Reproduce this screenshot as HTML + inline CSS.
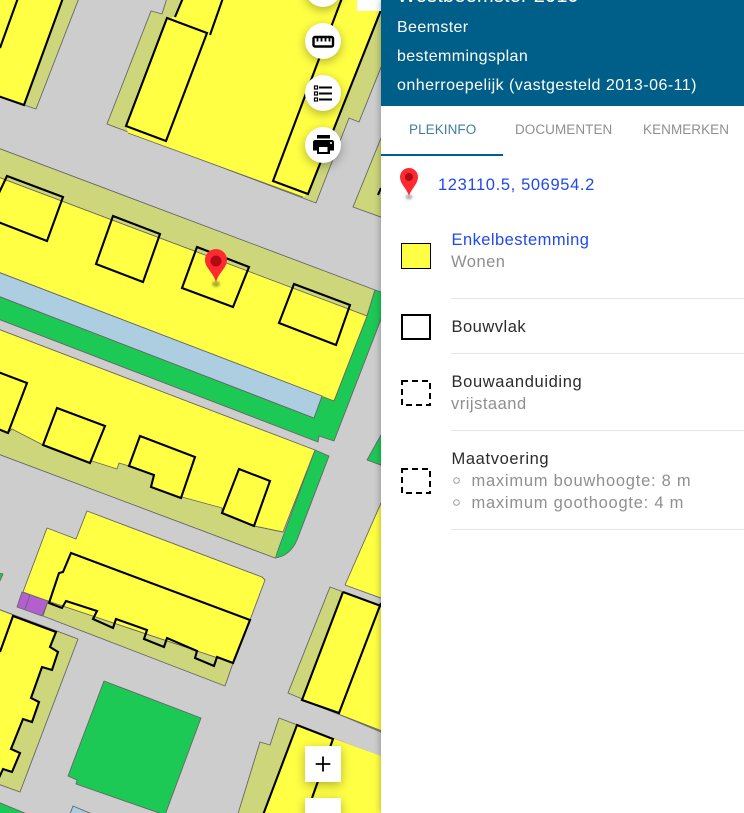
<!DOCTYPE html>
<html><head><meta charset="utf-8"><style>
html,body{margin:0;padding:0;background:#cdcdcd}
#r{position:relative;width:744px;height:813px;overflow:hidden;font-family:"Liberation Sans",sans-serif}
#m{position:absolute;left:0;top:0}
.b{position:absolute;background:#fff;box-shadow:0 3px 10px rgba(0,0,0,.3)}
.c{border-radius:50%;width:36px;height:36px;left:305px}
.b svg{position:absolute;left:0;top:0}
#p{position:absolute;left:381px;top:0;width:363px;height:813px;background:#fff;box-shadow:0 0 7px rgba(0,0,0,.35)}
#h{position:absolute;left:0;top:0;width:363px;height:106px;background:#005f88}
.t{position:absolute;white-space:nowrap;line-height:20px;font-size:16.5px;letter-spacing:.5px}
.w{color:#fff;left:16px;font-size:16px;letter-spacing:.38px}
.g{color:#8f8f8f}.k{color:#2b2b2b}.l{color:#2148f0}
.u{font-size:13.5px;letter-spacing:.06px}
.d{position:absolute;left:70px;right:0;height:1px;background:#e4e4e4}
</style></head><body><div id="r">
<svg id="m" width="381" height="813" viewBox="0 0 381 813">
<rect width="381" height="813" fill="#cdcdcd"/>
<g stroke="#666" stroke-width=".9" stroke-linejoin="round">
<polygon fill="#cdd67a" points="63,-2 79,-2 36,109 24,105"/>
<polygon fill="#ffff44" points="-2,-2 63,-2 24,105 -2,96"/>
<polygon fill="#cdd67a" points="167,-2 162,14 151,11 107,124 316,203 349,118 359,122 400,20 400,-2"/>
<polygon fill="#ffff44" stroke="none" points="183,-2 175,17 167,18 126,126 128,133 303,197 308,194 381,10 381,-2"/>
<line x1="128" y1="133" x2="303" y2="197"/>
<polygon fill="#cdd67a" points="-2,148 375,290 367,316 -2,178"/>
<polygon fill="#1dc955" points="-2,296 314,418 322,396 334,401 367,316 375,290 400,298 400,270 334,441 319,436 318,442 -2,319"/>
<polygon fill="#ffff44" points="-2,177 367,316 334,401 -2,272"/>
<polygon fill="#adcde0" points="-2,272 322,396 314,418 -2,296"/>
<path fill="#1dc955" d="M315,450L329,456L297,540Q290,556 275,558Z"/>
<polygon fill="#cdd67a" stroke="none" points="-2,410 150,465 283,520 283,532 275,558 -2,454"/>
<line x1="-2" y1="454" x2="275" y2="558" stroke="#666"/>
<polygon fill="#ffff44" points="-2,329 315,450 283,532 254,526 222,513 222,508 182,497 181,498 151,487 154,475 129,466 119,463 117,469 92,461 90,463 43,445 12,429 8,433 -2,429"/>
<polygon fill="#cdd67a" points="48,601 233,663 225,686 43,616"/>
<polygon fill="#ffff44" points="87,511 262,577 265,580 250,620 233,663 48,601 23,592 47,528 76,539"/>
<polygon fill="#b35fcf" points="22,592 48,601 42,616 17,607"/>
<line x1="30" y1="595" x2="25" y2="609"/>
<polygon fill="#cdd67a" points="-2,609 78,639 20,792 -2,784"/>
<polygon fill="#ffff44" stroke="none" points="-2,610 13,616 56,632 50,647 58,652 52,670 42,667 31,698 39,702 32,722 23,719 11,749 20,753 12,772 3,769 -2,780"/>
<polygon fill="#1dc955" points="104,681 201,718 165,815 76,784 77,780 68,776"/>
<polygon fill="#1dc955" points="-2,802 27,814 -2,814"/>
<polygon fill="#adcde0" points="73,806 92,814 70,814"/>
<polygon fill="#1dc955" points="-2,573 3,574 -2,585"/>
<polygon fill="#cdd67a" points="330,587 400,613 400,740 288,693"/>
<polygon fill="#ffff44" points="343,592 400,613 400,738 302,700"/>
<polygon fill="#ffff44" points="381,503 345,585 400,605 400,503"/>
<polygon fill="#cdd67a" points="381,138 353,207 400,224 400,138"/>
<polygon fill="#1dc955" points="381,435 367,460 400,472 400,435"/>
<polygon fill="#cdd67a" points="279,718 400,764 400,830 233,830 260,742 270,745"/>
<polygon fill="#ffff44" stroke="none" points="297,725 400,763 400,830 257,830"/>
</g>
<g fill="none" stroke="#000" stroke-width="2.1" stroke-linejoin="miter">
<path d="M18,-2L0,48M63,-2L24,105L-2,96"/>
<polygon points="167,18 207,33 166,141 126,126"/>
<path d="M175,17L183,-2M223,-2L210,35"/>
<path d="M342,-2L273,181L308,194L381,10"/>
<path d="M378,195L381,188"/>
<path d="M-2,195L7,176L63,197L47,241L-2,222"/>
<polygon points="113,216 160,234 143,282 96,264"/>
<polygon points="197,247 249,267 233,307 182,288"/>
<polygon points="294,284 350,305 336,345 279,323"/>
<path d="M-2,372L27,383L8,433L-2,429"/>
<polygon points="57,408 105,426 90,463 43,445"/>
<polygon points="140,436 195,457 181,498 151,487 154,475 129,466"/>
<polygon points="239,469 270,481 254,526 222,513"/>
<polygon points="71,553 250,620 233,663 217,657 214,666 195,658 197,651 167,638 164,647 144,639 147,630 116,619 113,628 93,619 97,611 66,601 62,608 49,603 59,573 63,572"/>
<path d="M0,652L13,616L56,632L50,647L58,652L52,670L42,667L31,698L39,702L32,722L23,719L11,749L20,753L12,772L3,769L-2,780"/>
<path d="M343,592L400,613M343,592L302,700L339,713L381,603"/>
<path d="M263,815L297,725L333,739L312,798"/>
</g>
<ellipse cx="216" cy="284" rx="4" ry="3" fill="#5a5a20" opacity=".5" style="filter:blur(1px)"/>
<path d="M216,282C213,272 205,268 205,260A11,11 0 0 1 227,260C227,268 219,272 216,282Z" fill="#ff2a2f"/>
<circle cx="216" cy="261" r="5.500" fill="#b00a12"/>
</svg>

<div class="b c" style="top:-29px"></div>
<div class="b" style="left:357px;top:-10px;width:24px;height:21px;box-shadow:none"></div>
<div class="b c" style="top:23px"><svg width="36" height="36"><rect x="8.500" y="14" width="19.500" height="9.500" rx="1.500" fill="none" stroke="#000" stroke-width="2.400"/><path d="M12.500,14v4.500M16.500,14v4.500M20.500,14v4.500M24.500,14v4.500" stroke="#000" stroke-width="1.800"/></svg></div>
<div class="b c" style="top:75px"><svg width="36" height="36"><g fill="none" stroke="#000"><rect x="9.500" y="11" width="3" height="3" stroke-width="1.200"/><rect x="9.500" y="17" width="3" height="3" stroke-width="1.200"/><rect x="9.500" y="23" width="3" height="3" stroke-width="1.200"/><path d="M14,12.500H27M14,18.500H27M14,24.500H27" stroke-width="2"/></g></svg></div>
<div class="b c" style="top:127px"><svg width="36" height="36"><path fill="#000" d="M12,8H25V11.500H12ZM10.500,13H26.500Q29,13 29,15.500V23.500H25V27H12V23.500H8V15.500Q8,13 10.500,13Z"/><rect x="14" y="20" width="8.500" height="5" fill="#fff"/><circle cx="26" cy="16" r="1" fill="#fff"/></svg></div>
<div class="b" style="left:305px;top:746px;width:36px;height:36px"><svg width="36" height="36"><path d="M18,10.500V25.500M10.700,18H25.300" stroke="#000" stroke-width="1.800"/></svg></div>
<div class="b" style="left:305px;top:798px;width:36px;height:36px"></div>

<div id="p">
<div id="h">
<div class="t w" style="top:-14px;font-size:20px;letter-spacing:.2px">Westbeemster 2019</div>
<div class="t w" style="top:18px">Beemster</div>
<div class="t w" style="top:47px">bestemmingsplan</div>
<div class="t w" style="top:76px;letter-spacing:.47px">onherroepelijk (vastgesteld 2013-06-11)</div>
</div>
<div class="t u" style="left:28px;top:120px;color:#3f7f9f">PLEKINFO</div>
<div class="t u g" style="left:134px;top:120px">DOCUMENTEN</div>
<div class="t u g" style="left:262px;top:120px">KENMERKEN</div>
<div style="position:absolute;left:0;top:154px;width:122px;height:2px;background:#005f88"></div>

<svg style="position:absolute;left:15px;top:165px" width="26" height="36"><ellipse cx="13" cy="32" rx="3.500" ry="2.500" fill="#666" opacity=".5" style="filter:blur(1px)"/><path d="M13,31C11,24 4,19 4,12A9,9 0 0 1 22,12C22,19 15,24 13,31Z" fill="#ff2a2f"/><circle cx="13" cy="12" r="4" fill="#b00a12"/></svg>
<div class="t l" style="left:57px;top:175px;letter-spacing:.63px">123110.5, 506954.2</div>

<div style="position:absolute;left:20px;top:243px;width:28px;height:24px;background:#ffff44;border:1px solid #000"></div>
<div class="t l" style="left:70.500px;top:230px;letter-spacing:.45px">Enkelbestemming</div>
<div class="t g" style="left:70px;top:252px">Wonen</div>
<div class="d" style="top:298px"></div>

<div style="position:absolute;left:20px;top:314px;width:26px;height:22px;border:2px solid #000"></div>
<div class="t k" style="left:70.500px;top:317px">Bouwvlak</div>
<div class="d" style="top:353px"></div>

<svg style="position:absolute;left:20px;top:380px" width="30" height="26"><rect x="1" y="1" width="28" height="24" fill="none" stroke="#000" stroke-width="2" stroke-dasharray="6 4"/></svg>
<div class="t k" style="left:70.500px;top:372px;letter-spacing:.63px">Bouwaanduiding</div>
<div class="t g" style="left:70px;top:394px">vrijstaand</div>
<div class="d" style="top:430px"></div>

<svg style="position:absolute;left:20px;top:468px" width="30" height="26"><rect x="1" y="1" width="28" height="24" fill="none" stroke="#000" stroke-width="2" stroke-dasharray="6 4"/></svg>
<div class="t k" style="left:70.500px;top:449px;letter-spacing:.63px">Maatvoering</div>
<svg style="position:absolute;left:70px;top:475px" width="12" height="32"><circle cx="5.500" cy="5.500" r="2.800" fill="none" stroke="#a0a0a0" stroke-width="1"/><circle cx="5.500" cy="27.500" r="2.800" fill="none" stroke="#a0a0a0" stroke-width="1"/></svg>
<div class="t g" style="left:90.500px;top:471px;letter-spacing:.75px">maximum bouwhoogte: 8 m</div>
<div class="t g" style="left:90.500px;top:493px;letter-spacing:.75px">maximum goothoogte: 4 m</div>
<div class="d" style="top:529px"></div>
</div>
</div></body></html>
